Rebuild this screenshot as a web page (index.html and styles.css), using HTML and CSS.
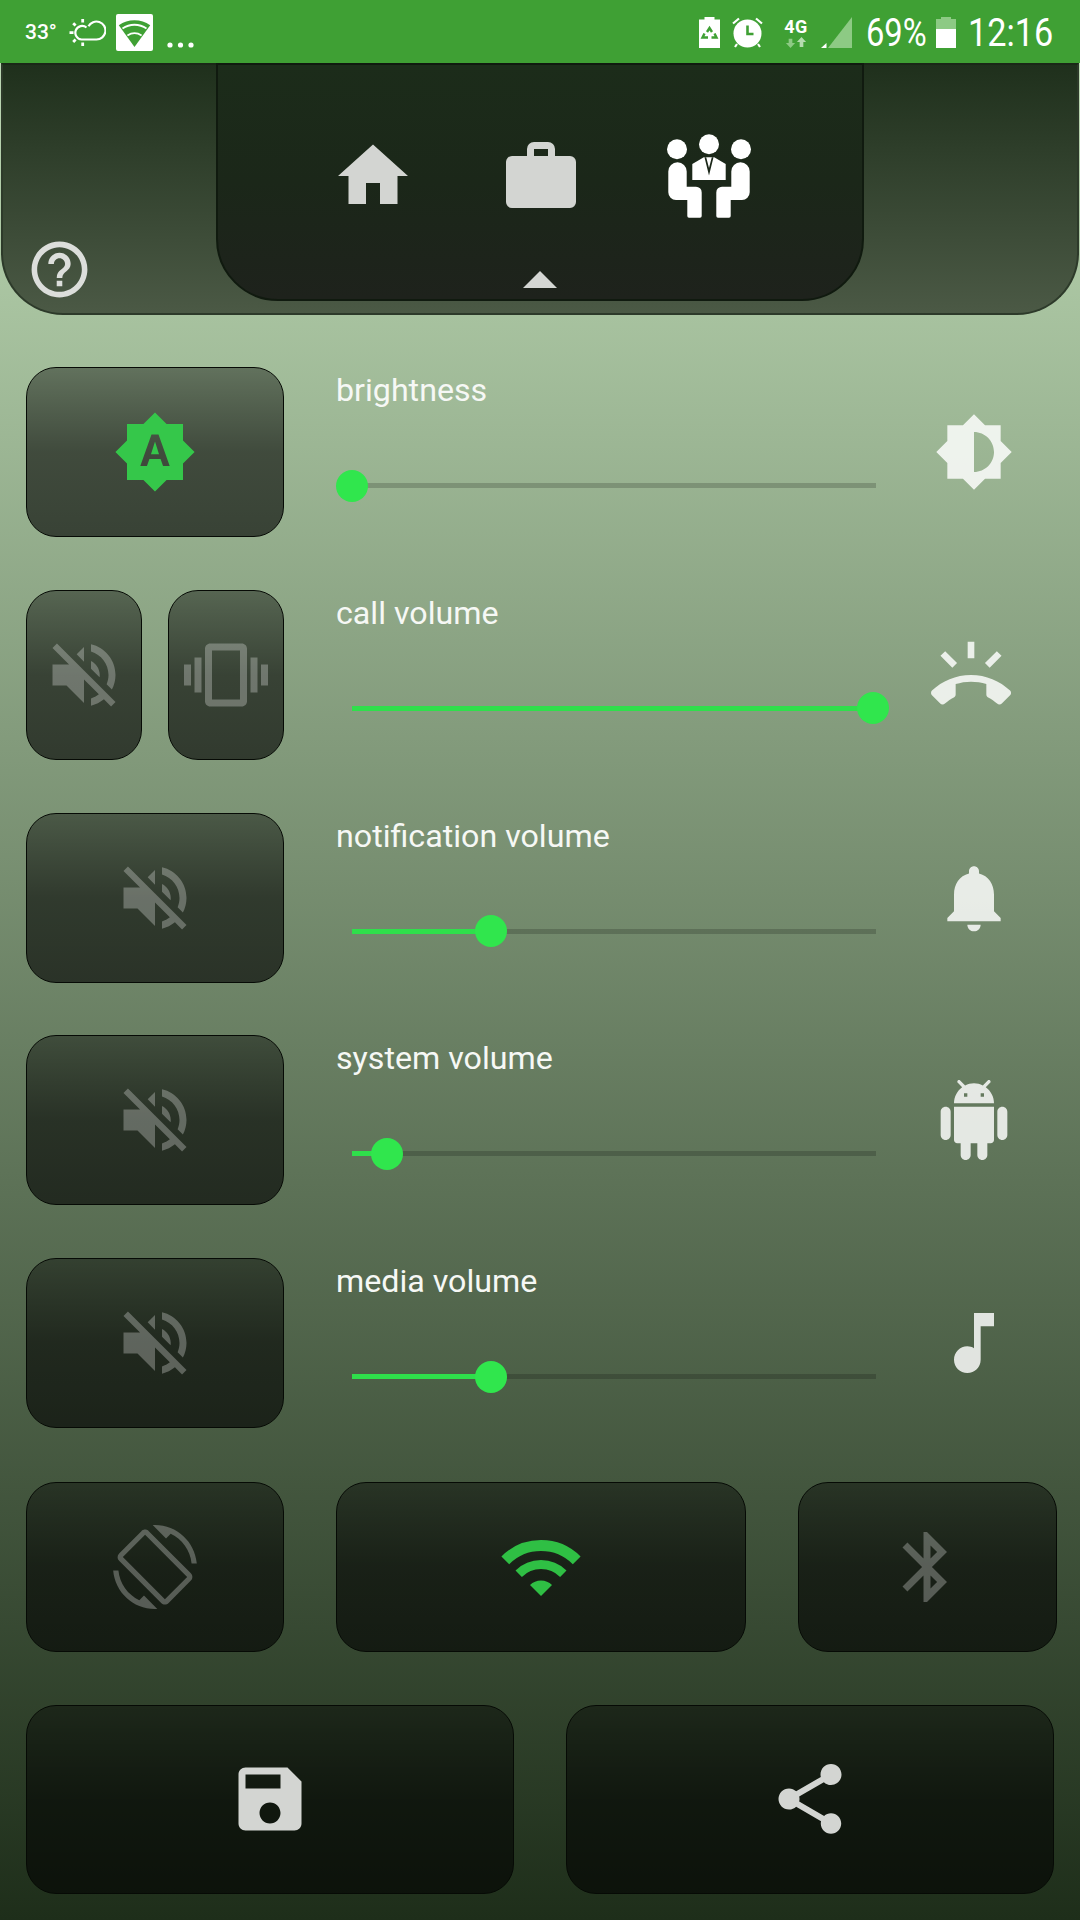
FILE: index.html
```html
<!DOCTYPE html>
<html lang="en">
<head>
<meta charset="utf-8">
<title>Sound profile</title>
<link rel="stylesheet" href="styles.css">
</head>
<body>
<div class="statusbar">
  <div class="sb-group">
    <span class="sb-temp">33°</span>
    <svg class="sb-weather" viewBox="0 0 37 27"><path class="ln" d="M11 20.500H27.500a9 9 0 1 0-8-13.200M17.500 8.500a6.800 6.800 0 1 0-5 12"/><path class="ray" d="M.5 13.700H4.500M13.700 0V3.500M13.700 23.500V27M4.200 4.200l2.400 2.400M4.200 23l2.400-2.400"/></svg>
    <svg class="sb-wifi" viewBox="0 0 37 37"><rect class="wh" width="37" height="37" rx="2"/><path class="gr" d="M18.500 33 2.800 11.200a27 27 0 0 1 31.400 0z"/><path class="wl" d="M6.500 14.500a21 21 0 0 1 24 0M11.400 21.500a13 13 0 0 1 14.200 0"/></svg>
    <svg class="sb-dots" viewBox="0 0 27 37"><circle class="wh" cx="3" cy="31" r="2.600"/><circle class="wh" cx="13.500" cy="31" r="2.600"/><circle class="wh" cx="24" cy="31" r="2.600"/></svg>
  </div>
  <div class="sb-group">
    <svg class="sb-saver" viewBox="0 0 21 31"><path class="wh" d="M5.500 0h10v2.500h5.500V31H0V2.500h5.500z"/><path class="gl" d="M8 15l2.500-4 2.500 4M15.500 16.500l2 4h-5M9 20.500H3.500l2-4"/></svg>
    <svg class="sb-alarm" viewBox="0 0 31 31"><circle class="wh" cx="15.500" cy="16.500" r="14"/><path class="gb" d="M15.500 8.500V17H21.500"/><path class="ln" d="M1 6.500 7 1.500M30 6.500 24 1.500M5 27 3 30M26 27l2 3"/></svg>
    <div class="sb-net">
      <span class="sb-4g">4G</span>
      <svg class="sb-arrows" viewBox="0 0 24 12"><path class="dim" d="M6 12 1 6.500h3V2h4v4.500h3z"/><path class="dim2" d="M18 0l5 5.500h-3V11h-4V5.500h-3z"/></svg>
    </div>
    <svg class="sb-signal" viewBox="0 0 31 31"><path class="dim" d="M31 0V31H7z"/><path class="wh" d="M5.500 26V31H0z"/></svg>
    <span class="sb-big sb-pct">69%</span>
    <svg class="sb-batt" viewBox="0 0 20 31"><path class="dim" d="M5 0h10v2h5v10H0V2h5z"/><rect class="wh" y="12" width="20" height="19"/></svg>
    <span class="sb-big sb-time">12:16</span>
  </div>
</div>

<header class="header">
  <div class="help-slot">
    <svg class="help" viewBox="0 0 24 24"><path d="M11 18h2v-2h-2v2zm1-16C6.480 2 2 6.480 2 12s4.480 10 10 10 10-4.480 10-10S17.520 2 12 2zm0 18c-4.410 0-8-3.590-8-8s3.590-8 8-8 8 3.590 8 8-3.590 8-8 8zm0-14c-2.210 0-4 1.790-4 4h2c0-1.100.9-2 2-2s2 .9 2 2c0 2-3 1.750-3 5h2c0-2.250 3-2.500 3-5 0-2.210-1.790-4-4-4z"/></svg>
  </div>
  <nav class="tab">
    <div class="tab-icons">
      <svg class="ic soft" viewBox="0 0 24 24"><path d="M10 20v-6h4v6h5v-8h3L12 3 2 12h3v8z"/></svg>
      <svg class="ic soft" viewBox="0 0 84 84"><path fill-rule="evenodd" d="M35 8h14a7 7 0 0 1 7 7v7h15a6 6 0 0 1 6 6v40a6 6 0 0 1-6 6H13a6 6 0 0 1-6-6V28a6 6 0 0 1 6-6h15v-7a7 7 0 0 1 7-7zm0 7v7h14v-7z"/></svg>
      <svg class="ic white" viewBox="0 0 84 84">
        <circle cx="42" cy="10.300" r="10"/><circle cx="10" cy="15.300" r="10"/><circle cx="74" cy="15.300" r="10"/>
        <path d="M1.300 37.500a9.200 9.200 0 0 1 18.400 0V52.700H29a5.700 5.700 0 0 1 5.700 5.700V82a1.700 1.700 0 0 1-1.700 1.700H22a1.700 1.700 0 0 1-1.700-1.700V66H9a7.700 7.700 0 0 1-7.700-7.700z"/>
        <path d="M82.700 37.500a9.200 9.200 0 0 0-18.400 0V52.700H55a5.700 5.700 0 0 0-5.700 5.700V82a1.700 1.700 0 0 0 1.700 1.700H62a1.700 1.700 0 0 0 1.700-1.700V66H75a7.700 7.700 0 0 0 7.700-7.700z"/>
        <path d="M25.300 46V30l11.500-6.700h10.400L58.700 30V46z"/>
        <path class="tie" d="M37.500 23.300 42 41.500l4.500-18.200h-1.700L42 34l-2.800-10.700z"/>
      </svg>
    </div>
    <span class="caret"></span>
  </nav>
</header>

<main class="panel">
  <section class="row">
    <div class="btn-group">
      <button class="btn">
        <svg class="ic green" viewBox="0 0 24 24"><path d="M10.850 12.650h2.300L12 9l-1.150 3.650zM20 8.690V4h-4.690L12 .69 8.690 4H4v4.690L.69 12 4 15.310V20h4.690L12 23.310 15.310 20H20v-4.690L23.310 12 20 8.690zM14.300 16l-.7-2h-3.200l-.7 2H7.800L11 7h2l3.200 9h-1.900z"/></svg>
      </button>
    </div>
    <div class="slider">
      <div class="label">brightness</div>
      <div class="track"><div class="fill" style="width:0%"><span class="thumb"></span></div></div>
    </div>
    <svg class="side" viewBox="0 0 24 24"><path d="M20 15.310L23.310 12 20 8.690V4h-4.690L12 .69 8.690 4H4v4.690L.69 12 4 15.310V20h4.690L12 23.310 15.310 20H20v-4.690zM12 18V6c3.310 0 6 2.690 6 6s-2.690 6-6 6z"/></svg>
  </section>

  <section class="row">
    <div class="btn-group">
      <button class="btn">
        <svg class="ic off" viewBox="0 0 24 24"><path d="M16.500 12c0-1.770-1.020-3.290-2.500-4.030v2.210l2.450 2.450c.03-.2.05-.41.05-.63zm2.500 0c0 .94-.2 1.820-.54 2.640l1.510 1.510C20.630 14.910 21 13.500 21 12c0-4.280-2.990-7.860-7-8.770v2.060c2.890.86 5 3.540 5 6.710zM4.270 3L3 4.270 7.730 9H3v6h4l5 5v-6.730l4.250 4.250c-.67.52-1.420.93-2.250 1.180v2.060c1.380-.31 2.630-.95 3.690-1.810L19.730 21 21 19.730l-9-9L4.270 3zM12 4L9.910 6.090 12 8.180V4z"/></svg>
      </button>
      <button class="btn">
        <svg class="ic off" viewBox="0 0 24 24"><path d="M0 15h2V9H0v6zm3 2h2V7H3v10zm19-8v6h2V9h-2zm-3 8h2V7h-2v10zM16.500 3h-9C6.670 3 6 3.670 6 4.500v15c0 .83.67 1.500 1.500 1.500h9c.83 0 1.500-.67 1.500-1.500v-15c0-.83-.67-1.500-1.500-1.500zM16 19H8V5h8v14z"/></svg>
      </button>
    </div>
    <div class="slider">
      <div class="label">call volume</div>
      <div class="track"><div class="fill" style="width:99.4%"><span class="thumb"></span></div></div>
    </div>
    <svg class="side ring" viewBox="0 0 24 24"><path d="M23.710 16.670C20.660 13.780 16.540 12 12 12 7.460 12 3.340 13.780.29 16.670c-.18.18-.29.43-.29.71 0 .28.11.53.29.71l2.480 2.480c.18.18.43.29.71.29.27 0 .52-.11.7-.28.79-.74 1.690-1.360 2.660-1.850.33-.16.56-.5.56-.9v-3.100c1.450-.48 3-.73 4.600-.73s3.150.25 4.600.72v3.100c0 .39.23.74.56.9.98.49 1.870 1.120 2.670 1.850.18.18.43.28.7.28.28 0 .53-.11.71-.29l2.480-2.480c.18-.18.29-.43.29-.71 0-.27-.11-.52-.29-.7zM21.160 6.260l-1.410-1.410-3.560 3.550 1.410 1.410 3.560-3.550zM13 2h-2v5h2V2zM6.400 9.810L7.810 8.400 4.260 4.840 2.840 6.260 6.400 9.810z"/></svg>
  </section>

  <section class="row">
    <div class="btn-group">
      <button class="btn">
        <svg class="ic off" viewBox="0 0 24 24"><path d="M16.500 12c0-1.770-1.020-3.290-2.500-4.030v2.210l2.450 2.450c.03-.2.05-.41.05-.63zm2.500 0c0 .94-.2 1.820-.54 2.640l1.510 1.510C20.630 14.910 21 13.500 21 12c0-4.280-2.990-7.860-7-8.770v2.060c2.890.86 5 3.540 5 6.710zM4.270 3L3 4.270 7.730 9H3v6h4l5 5v-6.730l4.250 4.250c-.67.52-1.420.93-2.250 1.180v2.060c1.380-.31 2.630-.95 3.690-1.810L19.730 21 21 19.730l-9-9L4.270 3zM12 4L9.910 6.090 12 8.180V4z"/></svg>
      </button>
    </div>
    <div class="slider">
      <div class="label">notification volume</div>
      <div class="track"><div class="fill" style="width:26.500%"><span class="thumb"></span></div></div>
    </div>
    <svg class="side" viewBox="0 0 24 24"><path d="M12 22c1.100 0 2-.9 2-2h-4c0 1.100.89 2 2 2zm6-6v-5c0-3.070-1.640-5.640-4.500-6.320V4c0-.83-.67-1.500-1.500-1.500s-1.500.67-1.500 1.500v.68C7.630 5.360 6 7.920 6 11v5l-2 2v1h16v-1l-2-2z"/></svg>
  </section>

  <section class="row">
    <div class="btn-group">
      <button class="btn">
        <svg class="ic off" viewBox="0 0 24 24"><path d="M16.500 12c0-1.770-1.020-3.290-2.500-4.030v2.210l2.450 2.450c.03-.2.05-.41.05-.63zm2.500 0c0 .94-.2 1.820-.54 2.640l1.510 1.510C20.630 14.910 21 13.500 21 12c0-4.280-2.990-7.860-7-8.770v2.060c2.890.86 5 3.540 5 6.710zM4.270 3L3 4.270 7.730 9H3v6h4l5 5v-6.730l4.250 4.250c-.67.52-1.420.93-2.250 1.180v2.060c1.380-.31 2.630-.95 3.690-1.810L19.730 21 21 19.730l-9-9L4.270 3zM12 4L9.910 6.090 12 8.180V4z"/></svg>
      </button>
    </div>
    <div class="slider">
      <div class="label">system volume</div>
      <div class="track"><div class="fill" style="width:6.700%"><span class="thumb"></span></div></div>
    </div>
    <svg class="side" viewBox="0 0 24 24"><path d="M6 18c0 .55.45 1 1 1h1v3.500c0 .83.67 1.500 1.500 1.500s1.500-.67 1.500-1.500V19h2v3.500c0 .83.67 1.500 1.500 1.500s1.500-.67 1.500-1.500V19h1c.55 0 1-.45 1-1V8H6v10zM3.500 8C2.670 8 2 8.670 2 9.500v7c0 .83.67 1.500 1.500 1.500S5 17.330 5 16.500v-7C5 8.670 4.330 8 3.500 8zm17 0c-.83 0-1.500.67-1.500 1.500v7c0 .83.67 1.500 1.500 1.500s1.500-.67 1.500-1.500v-7c0-.83-.67-1.500-1.500-1.500zm-4.970-5.840l1.300-1.300c.2-.2.2-.51 0-.71-.2-.2-.51-.2-.71 0l-1.480 1.480C13.850 1.230 12.950 1 12 1c-.96 0-1.860.23-2.660.63L7.850.15c-.2-.2-.51-.2-.71 0-.2.2-.2.51 0 .71l1.310 1.310C6.970 3.260 6 5.010 6 7h12c0-1.990-.97-3.750-2.470-4.840zM10 5H9V4h1v1zm5 0h-1V4h1v1z"/></svg>
  </section>

  <section class="row">
    <div class="btn-group">
      <button class="btn">
        <svg class="ic off" viewBox="0 0 24 24"><path d="M16.500 12c0-1.770-1.020-3.290-2.500-4.030v2.210l2.450 2.450c.03-.2.05-.41.05-.63zm2.500 0c0 .94-.2 1.820-.54 2.640l1.510 1.510C20.630 14.910 21 13.500 21 12c0-4.280-2.990-7.860-7-8.770v2.060c2.890.86 5 3.540 5 6.710zM4.270 3L3 4.270 7.730 9H3v6h4l5 5v-6.730l4.250 4.250c-.67.52-1.420.93-2.250 1.180v2.060c1.380-.31 2.630-.95 3.690-1.810L19.730 21 21 19.730l-9-9L4.270 3zM12 4L9.910 6.090 12 8.180V4z"/></svg>
      </button>
    </div>
    <div class="slider">
      <div class="label">media volume</div>
      <div class="track"><div class="fill" style="width:26.500%"><span class="thumb"></span></div></div>
    </div>
    <svg class="side" viewBox="0 0 24 24"><path d="M12 3v10.550c-.59-.34-1.270-.55-2-.55-2.210 0-4 1.790-4 4s1.790 4 4 4 4-1.790 4-4V7h4V3h-6z"/></svg>
  </section>

  <section class="toggles">
    <button class="btn w-rot">
      <svg class="ic off" viewBox="0 0 24 24"><path d="M16.480 2.520c3.270 1.550 5.610 4.720 5.970 8.480h1.500C23.440 4.840 18.290 0 12 0l-.66.03 3.810 3.810 1.330-1.320zm-6.250-.77c-.59-.59-1.540-.59-2.120 0L1.750 8.110c-.59.59-.59 1.540 0 2.120l12.020 12.020c.59.59 1.540.59 2.120 0l6.360-6.360c.59-.59.59-1.540 0-2.120L10.230 1.750zm4.600 19.440L2.810 9.170l6.360-6.360 12.020 12.020-6.360 6.360zm-7.310.29C4.250 19.940 1.910 16.760 1.550 13H.05C.56 19.160 5.710 24 12 24l.66-.03-3.810-3.810-1.330 1.320z"/></svg>
    </button>
    <button class="btn w-wifi">
      <svg class="wifi" viewBox="-42 -58 84 62"><path class="w1" d="M-35.700-35.700A50.500 50.500 0 0 1 35.700-35.700"/><path class="w2" d="M-22.300-22.300A31.500 31.500 0 0 1 22.300-22.300"/><path class="w3" d="M0 0-11-11A15.600 15.600 0 0 1 11-11z"/></svg>
    </button>
    <button class="btn w-bt">
      <svg class="ic off" viewBox="0 0 24 24"><path d="M17.710 7.710L12 2h-1v7.590L6.410 5 5 6.410 10.590 12 5 17.590 6.410 19 11 14.410V22h1l5.710-5.710-4.300-4.290 4.300-4.290zM13 5.830l1.880 1.880L13 9.590V5.830zm1.880 10.460L13 18.170v-3.760l1.880 1.880z"/></svg>
    </button>
  </section>

  <section class="actions">
    <button class="btn">
      <svg class="ic soft" viewBox="0 0 24 24"><path d="M17 3H5c-1.110 0-2 .9-2 2v14c0 1.100.89 2 2 2h14c1.100 0 2-.9 2-2V7l-4-4zm-5 16c-1.660 0-3-1.340-3-3s1.340-3 3-3 3 1.340 3 3-1.340 3-3 3zm3-10H5V5h10v4z"/></svg>
    </button>
    <button class="btn">
      <svg class="ic soft" viewBox="0 0 24 24"><path d="M18 16.080c-.76 0-1.440.3-1.960.77L8.910 12.700c.05-.23.09-.46.09-.7s-.04-.47-.09-.7l7.050-4.110c.54.5 1.250.81 2.040.81 1.660 0 3-1.340 3-3s-1.340-3-3-3-3 1.340-3 3c0 .24.04.47.09.7L8.040 9.810C7.500 9.310 6.790 9 6 9c-1.660 0-3 1.340-3 3s1.340 3 3 3c.79 0 1.500-.31 2.040-.81l7.120 4.160c-.05.21-.08.43-.08.65 0 1.610 1.310 2.920 2.920 2.920 1.610 0 2.920-1.310 2.920-2.920s-1.310-2.920-2.920-2.920z"/></svg>
    </button>
  </section>
</main>
</body>
</html>
```

FILE: styles.css
```css
* { box-sizing: border-box; }

html, body {
  margin: 0;
  padding: 0;
}

body {
  width: 1080px;
  height: 1920px;
  overflow: hidden;
  font-family: Roboto, "Liberation Sans", sans-serif;
  color: #f6f8f5;
  background: linear-gradient(180deg, #c2dfb9 0, #1e2e1a 1920px);
}

/* status bar */
.statusbar {
  height: 63px;
  padding: 2px 27px 0 25px;
  display: flex;
  align-items: center;
  justify-content: space-between;
  background: #3fa034;
  color: #fff;
}

.sb-group {
  display: flex;
  align-items: center;
}

.sb-temp {
  width: 32px;
  font-size: 21px;
  font-weight: 500;
  line-height: 31px;
  white-space: nowrap;
}

.sb-weather { width: 37px; height: 27px; margin-left: 12px; }
.sb-wifi { width: 37px; height: 37px; margin-left: 10px; }
.sb-dots { width: 27px; height: 37px; margin-left: 14px; }
.sb-saver { width: 21px; height: 31px; }
.sb-alarm { width: 31px; height: 31px; margin-left: 12px; }
.sb-signal { width: 31px; height: 31px; margin-left: 13px; }
.sb-batt { width: 20px; height: 31px; margin-left: 10px; }

.sb-net {
  width: 24px;
  height: 31px;
  margin-left: 21px;
  display: flex;
  flex-direction: column;
  align-items: center;
}

.sb-4g {
  font-size: 18px;
  font-weight: 700;
  line-height: 17px;
  letter-spacing: .5px;
  margin-top: 1px;
  white-space: nowrap;
}

.sb-arrows { width: 24px; height: 12px; margin-top: 2px; }

.sb-big {
  display: block;
  font-size: 38px;
  font-weight: 400;
  line-height: 40px;
  white-space: nowrap;
  transform-origin: left center;
  transform: scaleX(.86);
}

.sb-pct { width: 60px; margin-left: 14px; }
.sb-time { width: 85px; margin-left: 12px; transform: scaleX(.9); }

.wh { fill: #fff; }
.gr { fill: #3fa034; }
.dim { fill: #8dca84; }
.dim2 { fill: #b4dcae; }
.ln { fill: none; stroke: #fff; stroke-width: 2.2; }
.ray { fill: none; stroke: #fff; stroke-width: 2.8; }
.wl { fill: none; stroke: #fff; stroke-width: 1.8; }
.gl { fill: none; stroke: #3fa034; stroke-width: 2.4; }
.gb { fill: none; stroke: #3fa034; stroke-width: 2.6; }

/* header */
.header {
  height: 252px;
  margin: 0 1px;
  display: flex;
  border: 2px solid #2d3a2a;
  border-top-color: #1a2817;
  border-radius: 0 0 62px 62px;
  background: linear-gradient(180deg, #1f301c 0, #4b5945 100%);
}

.help-slot {
  width: 213px;
  padding: 0 0 10px 23px;
  display: flex;
  align-items: flex-end;
}

.help {
  width: 67px;
  height: 67px;
  fill: #dcdedb;
}

.tab {
  width: 648px;
  height: 238px;
  margin-top: -2px;
  padding-top: 69px;
  display: flex;
  flex-direction: column;
  align-items: center;
  border: 2px solid #101a0f;
  border-radius: 0 0 62px 62px;
  background: linear-gradient(180deg, #1c2c1a 0, #1b2719 50%, #1e221c 100%);
}

.tab-icons {
  display: flex;
  gap: 84px;
  margin-left: 2px;
}

.caret {
  width: 0;
  height: 0;
  margin-top: 53px;
  border-left: 17px solid transparent;
  border-right: 17px solid transparent;
  border-bottom: 17px solid #d4d6d3;
}

/* icons */
.ic {
  width: 84px;
  height: 84px;
  flex: none;
  display: block;
}

.soft { fill: #d3d5d2; }
.white { fill: #fff; }
.tie { fill: #1b2719; }
.green { fill: #35c74a; }
.off { fill: rgba(255, 255, 255, .28); }

.side {
  width: 80px;
  height: 80px;
  flex: none;
  fill: rgba(255, 255, 255, .83);
}

.ring { margin-left: -3px; }

.wifi {
  width: 84px;
  height: 62px;
  margin-top: 5px;
  display: block;
}

.w1, .w2 { fill: none; stroke: #2fbf44; }
.w1 { stroke-width: 11; }
.w2 { stroke-width: 9; }
.w3 { fill: #2fbf44; }

/* main panel */
.panel {
  padding: 52px 0 0 26px;
  display: flex;
  flex-direction: column;
  gap: 52.750px;
}

.row {
  display: grid;
  grid-template-columns: 258px 543.500px 80px;
  column-gap: 53px;
  align-items: center;
  height: 170px;
}

.btn-group {
  display: flex;
  gap: 26px;
  height: 100%;
}

.btn {
  flex: 1 1 0;
  min-width: 0;
  height: 100%;
  padding: 0;
  display: flex;
  align-items: center;
  justify-content: center;
  border: 1.500px solid #060a05;
  border-radius: 30px;
  background: linear-gradient(180deg, rgba(0, 0, 0, .4) 0, rgba(0, 0, 0, .59) 50%, rgba(0, 0, 0, .62) 100%);
}

/* sliders */
.slider {
  align-self: start;
  padding-top: 4px;
}

.label {
  margin-left: -1px;
  font-size: 32.200px;
  line-height: 38px;
  white-space: nowrap;
}

.track {
  width: 524px;
  height: 5px;
  margin: 74px 0 0 15px;
  background: rgba(0, 0, 0, .18);
}

.fill {
  position: relative;
  height: 100%;
  background: #2fdf4b;
}

.thumb {
  position: absolute;
  right: -16px;
  top: -13.500px;
  width: 32px;
  height: 32px;
  border-radius: 50%;
  background: #30e64d;
}

/* toggle rows */
.toggles,
.actions {
  display: flex;
}

.toggles { height: 170px; margin-top: 1px; gap: 52px; }
.actions { height: 189.500px; gap: 52.500px; width: 1027.500px; }

.w-rot { flex: none; width: 258px; }
.w-wifi { flex: none; width: 410px; }
.w-bt { flex: none; width: 258.500px; }
.actions .btn { flex: none; width: 487.500px; }
```
